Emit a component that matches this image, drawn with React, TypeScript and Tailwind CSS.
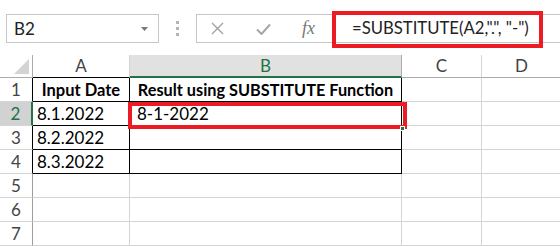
import React from "react";

const font = { fontFamily: "Lato, 'Open Sans', sans-serif" };

function Cell({
  w,
  children,
  className = "",
}: {
  w: string;
  children?: React.ReactNode;
  className?: string;
}) {
  return (
    <div className={`${w} shrink-0 h-full flex items-center ${className}`}>{children}</div>
  );
}

function Row({
  n,
  a,
  b,
  table,
  selected,
  bold,
}: {
  n: number;
  a?: string;
  b?: string;
  table: boolean;
  selected?: boolean;
  bold?: boolean;
}) {
  const bc = table ? "border-black" : "border-[#d4d4d4]";
  return (
    <div className="flex h-[24px]">
      <Cell
        w="w-[33px]"
        className={`justify-center border-b border-b-[#d4d4d4] border-r ${
          selected
            ? "bg-[#d2d2d2] border-r-2 border-r-[#217346] text-[#217346]"
            : table
            ? "border-r-black text-[#444]"
            : "border-r-[#9e9e9e] text-[#444]"
        } text-[17px]`}
      >
        {n}
      </Cell>
      <Cell
        w="w-[97px]"
        className={`border-r border-b ${bc} text-black pt-[1px] ${
          bold ? "font-bold text-[16.5px] justify-center" : "text-[17px] pl-[4px]"
        }`}
      >
        {a}
      </Cell>
      <Cell
        w="w-[272px]"
        className={`border-r border-b ${bc} text-black pt-[1px] ${
          bold ? "font-bold text-[16.3px] justify-center" : "text-[17px] pl-[7px]"
        }`}
      >
        {b}
      </Cell>
      <Cell w="w-[80px]" className="border-r border-b border-[#d4d4d4]" />
      <Cell w="w-[80px]" className="border-r border-b border-[#d4d4d4]" />
    </div>
  );
}

export default function App() {
  return (
    <div
      className="relative w-[560px] h-[246px] overflow-hidden bg-white flex flex-col"
      style={font}
    >
      <div className="mt-[2px] h-px bg-[#d4d4d4]" />
      {/* toolbar */}
      <div className="mt-[12px] h-[30px] flex items-stretch">
        <div className="ml-[6px] w-[153px] border border-[#c6c6c6] flex items-center justify-between pl-[7px] pr-[10px] text-[17px] text-[#222]">
          <span>B2</span>
          <svg width="7" height="4" viewBox="0 0 7 4">
            <path d="M0 0 L7 0 L3.5 4 Z" fill="#777" />
          </svg>
        </div>
        <div className="w-[37px] flex flex-col items-center justify-center gap-[3px]">
          <div className="w-[3px] h-[3px] bg-[#b5b5b5]" />
          <div className="w-[3px] h-[3px] bg-[#b5b5b5]" />
          <div className="w-[3px] h-[3px] bg-[#b5b5b5]" />
        </div>
        <div className="flex-1 border border-r-0 border-[#c6c6c6] flex items-center">
          <svg className="ml-[14px]" width="13" height="13" viewBox="0 0 13 13">
            <path d="M1 1 L12 12 M12 1 L1 12" stroke="#a0a0a0" strokeWidth="1.3" />
          </svg>
          <svg className="ml-[32px]" width="15" height="12" viewBox="0 0 15 12">
            <path d="M1 6.5 L5.5 11 L14 1.5" stroke="#a6a6a6" strokeWidth="2" fill="none" />
          </svg>
          <span
            className="ml-[31px] text-[18px] italic text-[#777]"
            style={{ fontFamily: "'Liberation Serif', serif" }}
          >
            fx
          </span>
          <span className="ml-[37px] text-[16.7px] text-[#222] whitespace-pre">
            =SUBSTITUTE(A2,".", "-")
          </span>
        </div>
      </div>
      {/* column headers */}
      <div className="mt-[12px] flex h-[23px] text-[17px] text-[#444]">
        <div className="w-[33px] shrink-0 h-full border-r border-b border-[#ababab] relative">
          <svg className="absolute right-[3px] bottom-[3px]" width="15" height="15" viewBox="0 0 15 15">
            <path d="M15 0 L15 15 L0 15 Z" fill="#d4d4d4" />
          </svg>
        </div>
        <div className="w-[97px] shrink-0 h-full flex items-center justify-center border-r border-r-[#d4d4d4] border-b border-b-black">
          A
        </div>
        <div className="w-[272px] shrink-0 h-full flex items-center justify-center bg-[#e1e1e1] border-r border-r-[#ababab] border-b-2 border-b-[#217346] text-[#217346]">
          B
        </div>
        <div className="w-[80px] shrink-0 h-full flex items-center justify-center border-r border-r-[#d4d4d4] border-b border-b-[#ababab]">
          C
        </div>
        <div className="w-[80px] shrink-0 h-full flex items-center justify-center border-r border-r-[#d4d4d4] border-b border-b-[#ababab]">
          D
        </div>
      </div>
      <Row n={1} a="Input Date" b="Result using SUBSTITUTE Function" table bold />
      <Row n={2} a="8.1.2022" b="8-1-2022" table selected />
      <Row n={3} a="8.2.2022" table />
      <Row n={4} a="8.3.2022" table />
      <Row n={5} table={false} />
      <Row n={6} table={false} />
      <Row n={7} table={false} />

      {/* highlight boxes */}
      <div className="absolute left-[332px] top-[11px] w-[211px] h-[37px] border-4 border-[#ed1c24]" />
      <div className="absolute left-[128px] top-[102px] w-[279px] h-[27px] border-4 border-[#ed1c24]" />
      <div className="absolute left-[400px] top-[126px] w-[5px] h-[5px] bg-[#217346] border border-white" />
    </div>
  );
}
